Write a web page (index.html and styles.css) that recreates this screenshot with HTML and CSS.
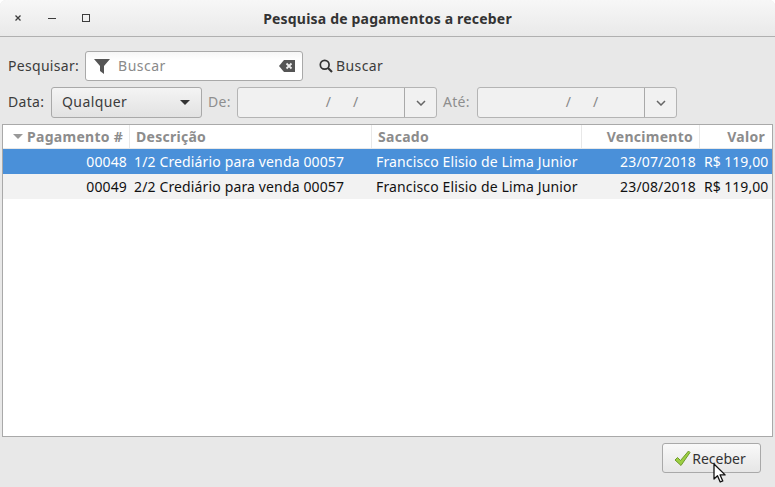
FILE: index.html
```html
<!DOCTYPE html>
<html lang="pt">
<head>
<meta charset="utf-8">
<title>Pesquisa de pagamentos a receber</title>
<link rel="stylesheet" href="styles.css">
</head>
<body>
<div class="window">
  <header class="titlebar">
    <div class="wm">
      <svg class="wm-icon" width="10" height="10" viewBox="0 0 10 10"><path d="M2.500 2.500l5 5M7.500 2.500l-5 5" stroke="#3c3c3c" stroke-width="1.300" fill="none"/></svg>
      <svg class="wm-icon" width="10" height="10" viewBox="0 0 10 10"><path d="M1 5.500h8" stroke="#3c3c3c" stroke-width="1" fill="none"/></svg>
      <svg class="wm-icon" width="10" height="10" viewBox="0 0 10 10"><rect x="1.500" y="1.500" width="7" height="7" stroke="#3c3c3c" stroke-width="1" fill="none"/></svg>
    </div>
    <h1 class="title">Pesquisa de pagamentos a receber</h1>
  </header>
  <main class="content">
    <div class="row row-search">
      <label class="lbl">Pesquisar:</label>
      <div class="entry">
        <svg class="filter" width="16" height="16" viewBox="0 0 16 16"><path d="M0 1h16L10 8v8L6 13V8z" fill="#555"/></svg>
        <span class="placeholder">Buscar</span>
        <svg class="clear" width="16" height="12" viewBox="0 0 16 12"><path d="M5 0h11v12H5L0 6z" fill="#555"/><path d="M7.500 3.500l5 5M12.500 3.500l-5 5" stroke="#eee" stroke-width="1.800"/></svg>
      </div>
      <div class="search-btn">
        <svg width="14" height="14" viewBox="0 0 14 14"><circle cx="5.700" cy="5.700" r="4.400" stroke="#333" stroke-width="1.700" fill="none"/><path d="M9 9l4 4" stroke="#333" stroke-width="2.200"/></svg>
        <span>Buscar</span>
      </div>
    </div>
    <div class="row row-date">
      <label class="lbl lbl-data">Data:</label>
      <div class="combo"><span>Qualquer</span><i class="arrow"></i></div>
      <label class="lbl dim lbl-de">De:</label>
      <div class="date">
        <div class="date-field"><span>/</span><span>/</span></div>
        <div class="date-btn"><svg width="10" height="6" viewBox="0 0 10 6"><path d="M1 1l4 4 4-4" stroke="#666" stroke-width="1.500" fill="none"/></svg></div>
      </div>
      <label class="lbl dim lbl-ate">Até:</label>
      <div class="date">
        <div class="date-field"><span>/</span><span>/</span></div>
        <div class="date-btn"><svg width="10" height="6" viewBox="0 0 10 6"><path d="M1 1l4 4 4-4" stroke="#666" stroke-width="1.500" fill="none"/></svg></div>
      </div>
    </div>
    <div class="table">
      <div class="thead">
        <div class="th r th-first"><i class="sort"></i><span>Pagamento #</span></div>
        <div class="th">Descrição</div>
        <div class="th">Sacado</div>
        <div class="th r">Vencimento</div>
        <div class="th r last">Valor</div>
      </div>
      <div class="tr selected">
        <div class="td r">00048</div>
        <div class="td">1/2 Crediário para venda 00057</div>
        <div class="td">Francisco Elisio de Lima Junior</div>
        <div class="td r">23/07/2018</div>
        <div class="td r money">R$ 119,00</div>
      </div>
      <div class="tr odd">
        <div class="td r">00049</div>
        <div class="td">2/2 Crediário para venda 00057</div>
        <div class="td">Francisco Elisio de Lima Junior</div>
        <div class="td r">23/08/2018</div>
        <div class="td r money">R$ 119,00</div>
      </div>
    </div>
    <div class="actions">
      <div class="button">
        <svg width="17" height="17" viewBox="0 0 17 17"><path d="M1 10l2.500-2.500 3 3L14.500 1 16 2.500 7 15.500z" fill="#9ccf42" stroke="#6f9a2c" stroke-width="1"/></svg>
        <span>Receber</span>
      </div>
      <svg class="cursor" width="15" height="21" viewBox="0 0 15 21"><path d="M1 1v15l3.500-3.300 2.700 6.300 2.600-1.100-2.700-6h5z" fill="#fff" stroke="#111" stroke-width="1.300" stroke-linejoin="round"/></svg>
    </div>
  </main>
</div>
</body>
</html>
```
FILE: styles.css
```css
* { box-sizing: border-box; }
html, body { margin: 0; padding: 0; background: #fff; }
body { font-family: "Noto Sans", "DejaVu Sans", sans-serif; font-size: 14px; color: #3c3c3c; }
.window { width: 775px; height: 487px; display: flex; flex-direction: column; background: #e8e8e8; border-radius: 6px 6px 0 0; overflow: hidden; }
.titlebar { height: 37px; flex: none; position: relative; display: flex; align-items: center; justify-content: center; background: linear-gradient(#f7f7f7, #e9e9e9); border-bottom: 1px solid #b0b0b0; }
.wm { position: absolute; left: 13px; top: 13px; display: flex; gap: 24px; }
.wm-icon { display: block; }
.title { margin: 0; font-size: 14px; font-weight: 700; color: #333; letter-spacing: 0.19px; }
.content { flex: 1; display: flex; flex-direction: column; padding: 14px 2px 0; }
.row { display: flex; align-items: center; padding-left: 6px; }
.row-search { height: 30px; }
.row-date { height: 31px; margin-top: 6px; }
.lbl { color: #3c3c3c; margin-right: 6px; padding-bottom: 2px; letter-spacing: 0.3px; }
.dim { color: #8e8e8e; }
.lbl-data { width: 37px; }
.lbl-de { margin-left: 6px; width: 23px; }
.lbl-ate { margin-left: 6px; width: 28px; }
.entry { width: 218px; height: 30px; background: linear-gradient(#f6f6f6, #fff 30%); border: 1px solid #a9a9a9; border-radius: 3px; display: flex; align-items: center; padding: 0 7px 0 8px; }
.filter { flex: none; margin-right: 8px; }
.placeholder { color: #8a8a8a; flex: 1; letter-spacing: 0.5px; padding-bottom: 2px; }
.clear { flex: none; }
.search-btn { display: flex; align-items: center; gap: 3px; margin-left: 16px; }
.search-btn span { letter-spacing: 0.4px; padding-bottom: 2px; }
.combo { width: 151px; height: 31px; border: 1px solid #a9a9a9; border-radius: 3px; background: linear-gradient(#f4f4f4, #e2e2e2); display: flex; align-items: center; justify-content: space-between; padding: 0 11px 0 10px; }
.combo span { letter-spacing: 0.4px; padding-bottom: 2px; }
.arrow { width: 0; height: 0; border-left: 5px solid transparent; border-right: 5px solid transparent; border-top: 5px solid #333; }
.date { width: 200px; height: 31px; border: 1px solid #b4b4b4; border-radius: 3px; background: #f1f1f1; display: flex; }
.date-field { flex: 1; display: flex; justify-content: center; gap: 22px; align-items: center; color: #888; padding: 0 0 2px 42px; }
.date-btn { width: 32px; border-left: 1px solid #a9a9a9; display: flex; align-items: center; justify-content: center; }
.table { flex: none; height: 313px; margin-top: 6px; background: #fff; border: 1px solid #a9a9a9; }
.thead, .tr { display: grid; grid-template-columns: 127px 242px 210px 118px 72px; }
.thead { height: 24px; }
.th { font-weight: 700; color: #8c8c8c; line-height: 20px; padding: 2px 6px 0; border-right: 1px solid #e8e8e8; border-bottom: 1px solid #e8e8e8; white-space: nowrap; letter-spacing: 0.27px; }
.th.r { text-align: right; }
.th.last { border-right: 0; padding-right: 7px; }
.th-first { display: flex; align-items: center; justify-content: space-between; padding: 0 6px 0 10px; }
.sort { width: 0; height: 0; border-left: 5px solid transparent; border-right: 5px solid transparent; border-top: 5px solid #999; }
.tr { height: 25px; color: #111; line-height: 23px; }
.td { padding: 1px 3px 0 4px; white-space: nowrap; letter-spacing: 0.14px; }
.td.r { text-align: right; }
.td:nth-child(n+4) { padding-right: 4px; }
.td.money { letter-spacing: 0; }
.selected { background: #4a90d9; color: #fff; }
.odd { background: #f2f2f2; }
.actions { flex: 1; display: flex; justify-content: flex-end; align-items: flex-start; padding: 6px 12px 0 0; position: relative; }
.button { width: 99px; height: 30px; border: 1px solid #a9a9a9; border-radius: 3px; background: linear-gradient(#f9f9f9, #e6e6e6); display: flex; align-items: center; justify-content: center; gap: 1px; padding-right: 3px; color: #333; }
.cursor { position: absolute; left: 711px; top: 26px; }
```
